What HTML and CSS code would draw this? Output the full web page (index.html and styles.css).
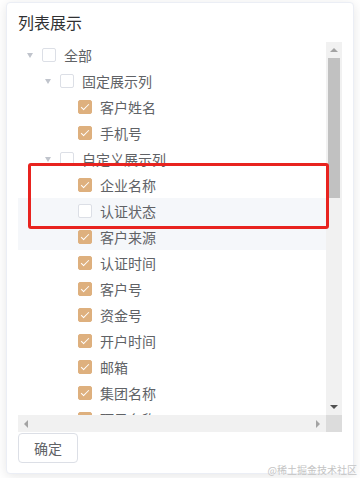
FILE: index.html
```html
<!DOCTYPE html>
<html lang="zh-CN">
<head>
    <meta charset="UTF-8">
    <meta name="viewport" content="width=device-width, initial-scale=1.0">
    <title>列表展示</title>
    <link rel="stylesheet" href="styles.css">
</head>
<body>
    <div class="popover">
        <div class="popover-title">列表展示</div>
        <div class="scroll-box">
            <div class="tree-view">
                <div class="tree">
                    <div class="node lv0"><span class="caret"></span><span class="check"></span><span class="label">全部</span></div>
                    <div class="node lv1"><span class="caret"></span><span class="check"></span><span class="label">固定展示列</span></div>
                    <div class="node lv2"><span class="caret leaf"></span><span class="check on"></span><span class="label">客户姓名</span></div>
                    <div class="node lv2"><span class="caret leaf"></span><span class="check on"></span><span class="label">手机号</span></div>
                    <div class="node lv1"><span class="caret"></span><span class="check"></span><span class="label">自定义展示列</span></div>
                    <div class="node lv2"><span class="caret leaf"></span><span class="check on"></span><span class="label">企业名称</span></div>
                    <div class="node lv2 hover"><span class="caret leaf"></span><span class="check"></span><span class="label">认证状态</span></div>
                    <div class="node lv2 hover"><span class="caret leaf"></span><span class="check on"></span><span class="label">客户来源</span></div>
                    <div class="node lv2"><span class="caret leaf"></span><span class="check on"></span><span class="label">认证时间</span></div>
                    <div class="node lv2"><span class="caret leaf"></span><span class="check on"></span><span class="label">客户号</span></div>
                    <div class="node lv2"><span class="caret leaf"></span><span class="check on"></span><span class="label">资金号</span></div>
                    <div class="node lv2"><span class="caret leaf"></span><span class="check on"></span><span class="label">开户时间</span></div>
                    <div class="node lv2"><span class="caret leaf"></span><span class="check on"></span><span class="label">邮箱</span></div>
                    <div class="node lv2"><span class="caret leaf"></span><span class="check on"></span><span class="label">集团名称</span></div>
                    <div class="node lv2"><span class="caret leaf"></span><span class="check on"></span><span class="label">项目名称</span></div>
                </div>
            </div>
            <div class="vbar">
                <span class="sb-btn"><i class="arr up dim"></i></span>
                <span class="vbar-thumb"></span>
                <span class="vbar-track"></span>
                <span class="sb-btn"><i class="arr down"></i></span>
            </div>
            <div class="hbar">
                <span class="sb-btn"><i class="arr left dim"></i></span>
                <span class="hbar-track"></span>
                <span class="sb-btn"><i class="arr right dim"></i></span>
            </div>
            <div class="corner"></div>
        </div>
        <div class="popover-footer">
            <button type="button" class="btn">确定</button>
        </div>
        <div class="mark"></div>
    </div>
    <div class="watermark">@稀土掘金技术社区</div>
</body>
</html>
```

FILE: styles.css
```css
body {
    margin: 0;
    background-color: #fff;
    font-family: "Noto Sans CJK SC", "Liberation Sans", sans-serif;
    width: 360px;
    height: 478px;
    overflow: hidden;
    position: relative;
}
.popover {
    position: relative;
    margin: 2px 6px;
    width: 348px;
    height: 472px;
    box-sizing: border-box;
    padding: 11px 11px 10px;
    border: 1px solid #ebeef5;
    border-radius: 4px;
    background-color: #fff;
    box-shadow: 0 2px 12px 0 rgba(0, 0, 0, 0.1);
}
.popover-title {
    font-size: 16px;
    line-height: 16px;
    color: #303133;
    margin-bottom: 12px;
}
.scroll-box {
    display: grid;
    grid-template-columns: 308px 16px;
    grid-template-rows: 373px 17px;
}
.tree-view {
    overflow: hidden;
}
.node {
    display: flex;
    align-items: center;
    height: 26px;
    font-size: 14px;
    color: #606266;
}
.node.hover {
    background-color: #f5f7fa;
}
.lv1 {
    padding-left: 18px;
}
.lv2 {
    padding-left: 36px;
}
.caret {
    width: 24px;
    height: 26px;
    display: flex;
    align-items: center;
    justify-content: center;
}
.caret::before {
    content: "";
    border-left: 3.5px solid transparent;
    border-right: 3.5px solid transparent;
    border-top: 5px solid #c0c4cc;
}
.caret.leaf::before {
    display: none;
}
.check {
    position: relative;
    width: 14px;
    height: 14px;
    box-sizing: border-box;
    border: 1px solid #dcdfe6;
    border-radius: 2px;
    background-color: #fff;
    margin-right: 8px;
}
.check.on {
    background-color: #deb07e;
    border-color: #deb07e;
}
.check.on::after {
    content: "";
    position: absolute;
    left: 4px;
    top: 1px;
    width: 3px;
    height: 7px;
    border: 1px solid #fff;
    border-left: 0;
    border-top: 0;
    transform: rotate(45deg);
}
.label {
    line-height: 26px;
}
.vbar {
    display: flex;
    flex-direction: column;
    background-color: #f1f1f1;
}
.hbar {
    display: flex;
    background-color: #f1f1f1;
}
.sb-btn {
    width: 16px;
    height: 16px;
    flex: none;
    display: flex;
    align-items: center;
    justify-content: center;
}
.hbar .sb-btn {
    height: 17px;
}
.vbar-thumb {
    height: 140px;
    margin: 0 2px;
    background-color: #c1c1c1;
}
.vbar-track {
    flex: 1;
}
.hbar-track {
    flex: 1;
}
.corner {
    background-color: #dcdcdc;
}
.arr {
    width: 0;
    height: 0;
}
.arr.up {
    border-left: 4px solid transparent;
    border-right: 4px solid transparent;
    border-bottom: 4px solid #505050;
}
.arr.down {
    border-left: 4px solid transparent;
    border-right: 4px solid transparent;
    border-top: 4px solid #505050;
}
.arr.left {
    border-top: 4px solid transparent;
    border-bottom: 4px solid transparent;
    border-right: 4px solid #505050;
}
.arr.right {
    border-top: 4px solid transparent;
    border-bottom: 4px solid transparent;
    border-left: 4px solid #505050;
}
.arr.up.dim {
    border-bottom-color: #a3a3a3;
}
.arr.left.dim {
    border-right-color: #a3a3a3;
}
.arr.right.dim {
    border-left-color: #a3a3a3;
}
.popover-footer {
    margin-top: 1px;
}
.btn {
    height: 30px;
    padding: 0 15px;
    font-family: inherit;
    font-size: 14px;
    line-height: 28px;
    color: #606266;
    background-color: #fff;
    border: 1px solid #dcdfe6;
    border-radius: 4px;
}
.mark {
    position: absolute;
    left: 21px;
    top: 160px;
    width: 301px;
    height: 66px;
    box-sizing: border-box;
    border: 3px solid #e8231f;
    border-radius: 3px;
}
.watermark {
    position: absolute;
    right: 3px;
    bottom: 2px;
    font-size: 10px;
    line-height: 12px;
    color: #c4c4c4;
}
```
